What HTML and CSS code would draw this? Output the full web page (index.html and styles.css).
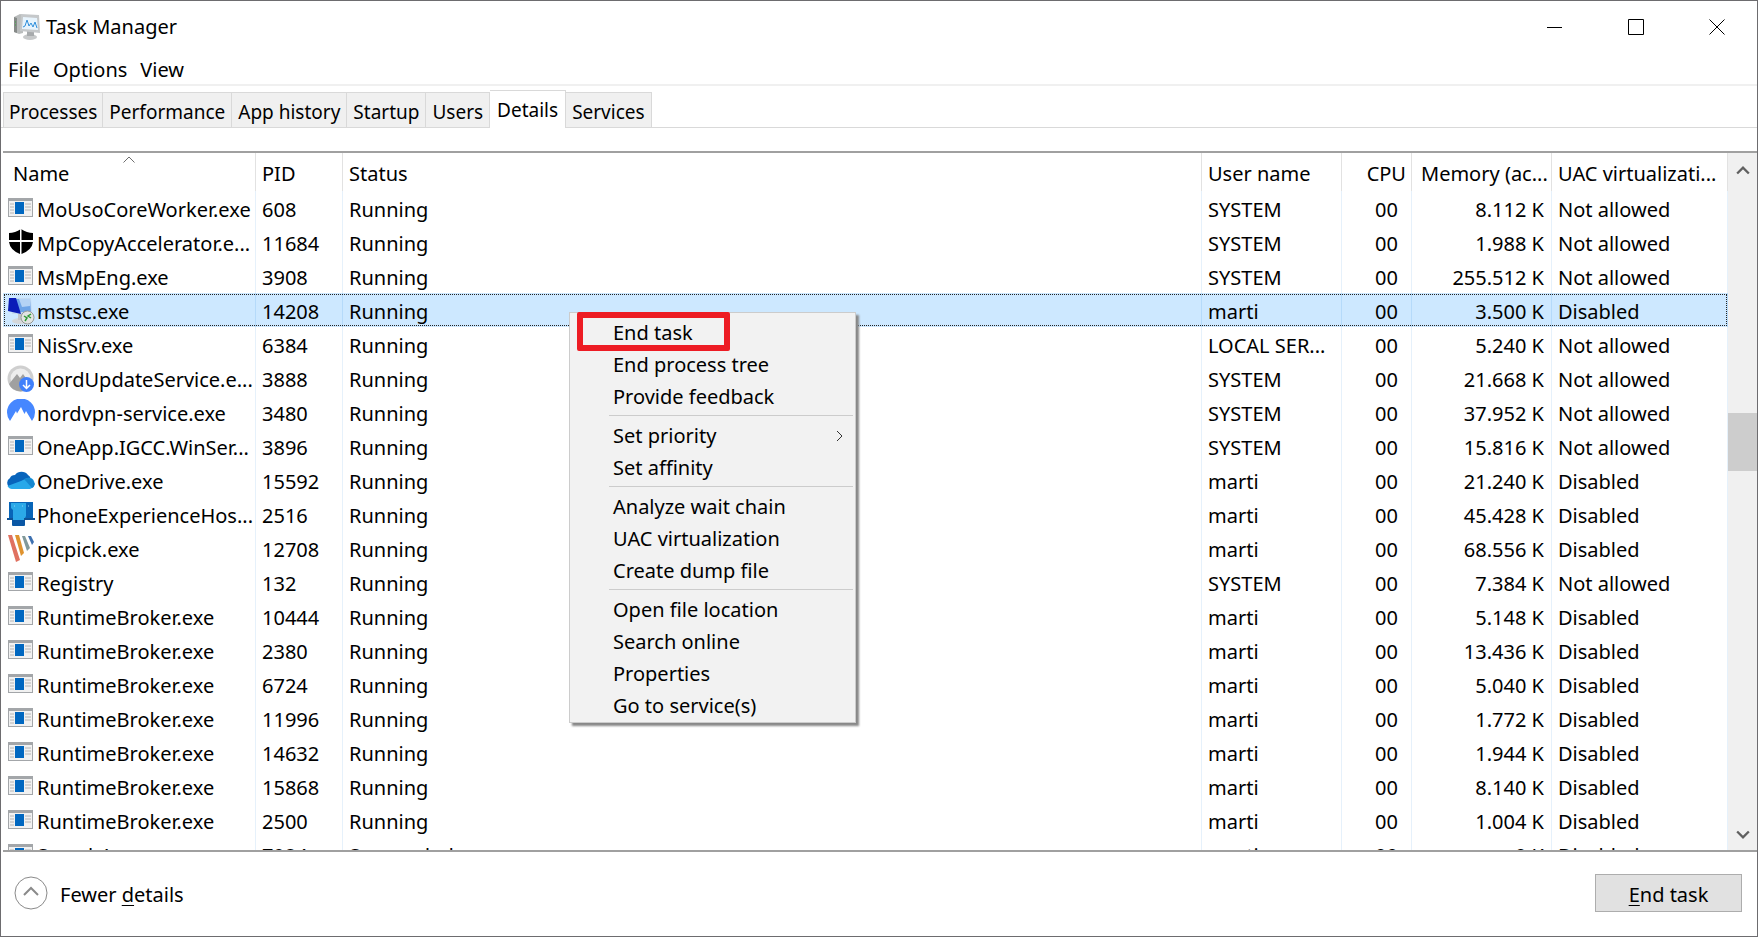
FILE: index.html
```html
<!DOCTYPE html>
<html lang="en">
<head>
    <meta charset="UTF-8">
    <meta name="viewport" content="width=device-width, initial-scale=1.0">
    <title>Task Manager</title>
    <link rel="stylesheet" href="styles.css">
</head>
<body>
    <!-- Process icons -->
    <svg class="sprite" aria-hidden="true">
        <symbol id="icon-exe" viewBox="0 0 28 28">
            <rect x="1" y="3" width="25" height="19" fill="#a3a6a9"/>
            <rect x="2" y="6" width="23" height="15" fill="#f1f1f1"/>
            <path d="M3 9h4M3 12h4M3 15h4M3 18h4M18 9h6M18 12h6M18 15h6" stroke="#b4b4b4"/>
            <rect x="8" y="7" width="9" height="12" fill="#0067c0"/>
        </symbol>
        <symbol id="icon-shield" viewBox="0 0 28 28">
            <path d="M14 0Q8 4 2 4V11H13V0.500ZM14 0Q20 4 26 4V11H14.500V0.500ZM2 13H13V25Q3 21 2 13ZM26 13H14.500V25Q25 21 26 13Z" fill="#000"/>
        </symbol>
        <symbol id="icon-mstsc" viewBox="0 0 28 28">
            <ellipse cx="13" cy="24" rx="8" ry="3" fill="#d5d8da"/>
            <path d="M11 17h6v6h-6z" fill="#c3c6c9"/>
            <path d="M2 1L24 1L25 17L5 17Z" fill="#c4daf0"/>
            <path d="M4 2L23 2L24 15L6 15Z" fill="#6fa5e8"/>
            <path d="M12 2L23 2L23 9L15 10Z" fill="#b5d3f5"/>
            <path d="M2 1L9 1L14 17L1 14Z" fill="#0a1bb8"/>
            <circle cx="20.500" cy="20.500" r="6.500" fill="#e2e4e2" stroke="#989c99"/>
            <path d="M17 19l3 2-2 3M24 17l-3 2 3 2" fill="none" stroke="#2d9a35" stroke-width="1.500"/>
        </symbol>
        <symbol id="icon-nordupdate" viewBox="0 0 28 28">
            <circle cx="13.500" cy="13.500" r="13" fill="#cfcfcf"/>
            <circle cx="13.500" cy="13.500" r="10" fill="#ededed"/>
            <path d="M2 19L10 9L13 13L16 9L24 20Q21 26 13.500 26.500Q5 26 2 19Z" fill="#a0a0a0"/>
            <circle cx="19.500" cy="19.500" r="7.500" fill="#4080fb"/>
            <path d="M19.500 15v8M16 20l3.500 3.500 3.500-3.500" fill="none" stroke="#fff" stroke-width="1.500"/>
        </symbol>
        <symbol id="icon-nordvpn" viewBox="0 0 28 28">
            <path d="M3 22Q0 18 0 13.500A14 14 0 0 1 28 13.500Q28 18 25 22L19 12L17.500 15L14 8L10 14.500L9 12Z" fill="#4687ff"/>
        </symbol>
        <symbol id="icon-onedrive" viewBox="0 0 28 28">
            <path d="M4 21A5.500 5.500 0 0 1 3 11Q4 8 8 8A8 8 0 0 1 21 8Q23 9 24 12L14 18Z" fill="#0864bc"/>
            <path d="M20 11Q25 10 27 14Q29 20 23 22H5Q2 22 0.500 19L14 14Z" fill="#28a8ea"/>
            <path d="M17 12Q21 10 25 12L28 17Q27 20 25 21Z" fill="#1687d0"/>
        </symbol>
        <symbol id="icon-phone" viewBox="0 0 28 28">
            <rect x="2" y="1" width="24" height="18" fill="#0865b8"/>
            <path d="M4 2H19V15L17 19H6V9L4 7Z" fill="#2ba9e8"/>
            <path d="M7 5h1M15 5h1M21 5h1" stroke="#8fd3f7"/>
            <path d="M0 17H6V19H0ZM17 17H28V19H17Z" fill="#0f5295"/>
            <path d="M5 19H18V24Q18 25 17 25H6Q5 25 5 24Z" fill="#0a57a5"/>
        </symbol>
        <symbol id="icon-picpick" viewBox="0 0 28 28">
            <path d="M1 0H5L13 25L9 27Z" fill="#e07160"/>
            <path d="M8 0H12L17 18L14 21Z" fill="#df932f"/>
            <path d="M15 1H18L23 13L20 16Z" fill="#81999a"/>
            <path d="M21 1H24L27 7L25 10Z" fill="#3d70b0"/>
        </symbol>
    </svg>

    <div class="window">
        <header class="title-bar">
            <svg class="app-icon" viewBox="0 0 28 28" aria-hidden="true">
                <path d="M1 4L7 1L10 2V20L6 21L1 19Z" fill="#b9bcbc"/>
                <path d="M1 4L4 5V20L1 19Z" fill="#868a88"/>
                <path d="M2 9h1M2 12h1" stroke="#3faa42"/>
                <ellipse cx="17" cy="24" rx="7" ry="3" fill="#c7c9ca"/>
                <path d="M14 18h7v5h-7z" fill="#a7aaac"/>
                <path d="M8 1L26 2L27 20L7 18Z" fill="#c5c8ca"/>
                <path d="M10 4L24 5L25 17L9 16Z" fill="#e7f4fd"/>
                <path d="M10 14L12 13L14 7L16 13L18 10L20 14L22 9L24 15" fill="none" stroke="#2f8fdb"/>
            </svg>
            <h1>Task Manager</h1>
            <div class="window-buttons">
                <button aria-label="Minimize"><svg viewBox="0 0 16 16"><path d="M0 8.500H15"/></svg></button>
                <button aria-label="Maximize"><svg viewBox="0 0 16 16"><path d="M0.500 0.500H15.500V15.500H0.500Z"/></svg></button>
                <button aria-label="Close"><svg viewBox="0 0 16 16"><path d="M0.500 0.500L15.500 15.500M15.500 0.500L0.500 15.500"/></svg></button>
            </div>
        </header>

        <nav class="menu-bar">
            <button>File</button>
            <button>Options</button>
            <button>View</button>
        </nav>

        <div class="tabs" role="tablist">
            <button role="tab">Processes</button>
            <button role="tab">Performance</button>
            <button role="tab">App history</button>
            <button role="tab">Startup</button>
            <button role="tab">Users</button>
            <button role="tab" class="active" aria-selected="true">Details</button>
            <button role="tab">Services</button>
        </div>

        <main class="list">
            <div class="list-view">
                <table>
                    <thead>
                        <tr>
                            <th class="col-name">Name
                                <svg class="sort-arrow" viewBox="0 0 12 7" aria-hidden="true"><path d="M0.500 6.500L6 1L11.500 6.500"/></svg>
                            </th>
                            <th class="col-pid">PID</th>
                            <th>Status</th>
                            <th class="col-user">User name</th>
                            <th class="col-cpu">CPU</th>
                            <th class="col-memory">Memory (ac...</th>
                            <th class="col-uac">UAC virtualizati...</th>
                        </tr>
                    </thead>
                    <tbody id="processList"></tbody>
                </table>
            </div>
            <div class="scrollbar">
                <button aria-label="Scroll up"><svg viewBox="0 0 12 10"><path d="M1 8L6 3L11 8"/></svg></button>
                <div class="track"><div class="thumb"></div></div>
                <button aria-label="Scroll down"><svg viewBox="0 0 12 10"><path d="M1 2L6 7L11 2"/></svg></button>
            </div>
        </main>

        <footer class="bottom-bar">
            <button class="fewer-details">
                <svg viewBox="0 0 34 34" aria-hidden="true">
                    <circle cx="17" cy="17" r="16"/>
                    <path class="chevron" d="M10 19L17 12L24 19"/>
                </svg>
                <span>Fewer <u>d</u>etails</span>
            </button>
            <button class="end-task"><span><u>E</u>nd task</span></button>
        </footer>

        <div class="context-menu" role="menu">
            <button role="menuitem" class="marked">End task</button>
            <button role="menuitem">End process tree</button>
            <button role="menuitem">Provide feedback</button>
            <hr>
            <button role="menuitem">Set priority
                <svg viewBox="0 0 8 12" aria-hidden="true"><path d="M1 1L6 6L1 11"/></svg>
            </button>
            <button role="menuitem">Set affinity</button>
            <hr>
            <button role="menuitem">Analyze wait chain</button>
            <button role="menuitem">UAC virtualization</button>
            <button role="menuitem">Create dump file</button>
            <hr>
            <button role="menuitem">Open file location</button>
            <button role="menuitem">Search online</button>
            <button role="menuitem">Properties</button>
            <button role="menuitem">Go to service(s)</button>
        </div>
    </div>

    <script>
        // icon, name, pid, status, user, memory, UAC virtualization
        const processes = [
            ["exe", "MoUsoCoreWorker.exe", 608, "Running", "SYSTEM", "8.112", "Not allowed"],
            ["shield", "MpCopyAccelerator.e...", 11684, "Running", "SYSTEM", "1.988", "Not allowed"],
            ["exe", "MsMpEng.exe", 3908, "Running", "SYSTEM", "255.512", "Not allowed"],
            ["mstsc", "mstsc.exe", 14208, "Running", "marti", "3.500", "Disabled"],
            ["exe", "NisSrv.exe", 6384, "Running", "LOCAL SER...", "5.240", "Not allowed"],
            ["nordupdate", "NordUpdateService.e...", 3888, "Running", "SYSTEM", "21.668", "Not allowed"],
            ["nordvpn", "nordvpn-service.exe", 3480, "Running", "SYSTEM", "37.952", "Not allowed"],
            ["exe", "OneApp.IGCC.WinSer...", 3896, "Running", "SYSTEM", "15.816", "Not allowed"],
            ["onedrive", "OneDrive.exe", 15592, "Running", "marti", "21.240", "Disabled"],
            ["phone", "PhoneExperienceHos...", 2516, "Running", "marti", "45.428", "Disabled"],
            ["picpick", "picpick.exe", 12708, "Running", "marti", "68.556", "Disabled"],
            ["exe", "Registry", 132, "Running", "SYSTEM", "7.384", "Not allowed"],
            ["exe", "RuntimeBroker.exe", 10444, "Running", "marti", "5.148", "Disabled"],
            ["exe", "RuntimeBroker.exe", 2380, "Running", "marti", "13.436", "Disabled"],
            ["exe", "RuntimeBroker.exe", 6724, "Running", "marti", "5.040", "Disabled"],
            ["exe", "RuntimeBroker.exe", 11996, "Running", "marti", "1.772", "Disabled"],
            ["exe", "RuntimeBroker.exe", 14632, "Running", "marti", "1.944", "Disabled"],
            ["exe", "RuntimeBroker.exe", 15868, "Running", "marti", "8.140", "Disabled"],
            ["exe", "RuntimeBroker.exe", 2500, "Running", "marti", "1.004", "Disabled"],
            ["exe", "SearchApp.exe", 7924, "Suspended", "marti", "0", "Disabled"],
        ];

        const selectedPid = 14208;
        const processList = document.getElementById('processList');

        processes.forEach(([icon, name, pid, status, user, memory, uac]) => {
            const row = document.createElement('tr');
            if (pid === selectedPid) {
                row.classList.add('selected');
            }
            row.innerHTML = `
                <td><div class="process"><svg><use href="#icon-${icon}"></use></svg>${name}</div></td>
                <td>${pid}</td>
                <td>${status}</td>
                <td>${user}</td>
                <td class="cpu">00</td>
                <td class="memory">${memory} K</td>
                <td>${uac}</td>
            `;
            processList.appendChild(row);
        });
    </script>
</body>
</html>
```
FILE: styles.css
```css
*, *::before, *::after {
    box-sizing: border-box;
}
body {
    margin: 0;
    font-family: "Noto Sans", sans-serif;
    font-size: 20px;
    line-height: 28px;
    color: #000;
}
button {
    margin: 0;
    padding: 0;
    border: none;
    background: none;
    font: inherit;
    color: inherit;
}
.sprite {
    display: none;
}
.window {
    position: relative;
    display: flex;
    flex-direction: column;
    height: 100vh;
    border: 1px solid #6d6c6f;
    background: #fff;
    overflow: hidden;
}

/* Title bar */
.title-bar {
    display: flex;
    align-items: center;
    height: 52px;
    padding-left: 12px;
}
.app-icon {
    width: 28px;
    height: 28px;
    margin-right: 5px;
}
h1 {
    margin: 0;
    font-size: 20px;
    font-weight: normal;
}
.window-buttons {
    display: flex;
    margin-left: auto;
    height: 100%;
}
.window-buttons button {
    display: flex;
    align-items: center;
    justify-content: center;
    width: 81px;
}
.window-buttons svg {
    width: 16px;
    height: 16px;
    fill: none;
    stroke: #000;
}

/* Menu */
.menu-bar {
    display: flex;
    gap: 13px;
    height: 33px;
    padding-top: 2px;
    padding-left: 7px;
    border-bottom: 2px solid #f0f0f0;
}

/* Tabs */
.tabs {
    display: flex;
    align-items: flex-end;
    height: 42px;
    padding-left: 2px;
    border-bottom: 1px solid #d9d9d9;
    font-size: 19px;
}
.tabs button {
    height: 35px;
    padding: 4px 6px 0;
    border: 1px solid #d9d9d9;
    border-left: none;
    border-bottom: none;
    background: #f0f0f0;
}
.tabs button:first-child {
    padding: 4px 5px 0;
    border-left: 1px solid #d9d9d9;
}
.tabs .active {
    height: 38px;
    margin-bottom: -1px;
    padding: 2px 7px 2px;
    background: #fff;
}

/* Process list */
.list {
    display: flex;
    flex: 1;
    min-height: 0;
    margin-top: 23px;
    margin-left: 2px;
    border-top: 2px solid #a0a0a0;
    border-bottom: 2px solid #a0a0a0;
}
.list-view {
    flex: 1;
    min-width: 0;
    overflow: hidden;
}
table {
    width: 100%;
    table-layout: fixed;
    border-collapse: separate;
    border-spacing: 0;
}
th, td {
    padding: 0 6px;
    text-align: left;
    font-weight: normal;
    white-space: nowrap;
}
th {
    position: relative;
    height: 38px;
    padding-top: 4px;
    border-right: 1px solid #e2e2e2;
}
td {
    height: 34px;
    padding-top: 4px;
    border-right: 1px solid #e6f1fb;
}
.col-name {
    width: 253px;
    padding-left: 10px;
}
.col-pid {
    width: 87px;
}
.col-user {
    width: 140px;
}
.col-cpu {
    width: 70px;
    text-align: right;
}
.col-memory {
    width: 140px;
    padding-left: 9px;
}
.col-memory, .col-cpu {
    padding-right: 5px;
}
.col-uac {
    width: 176px;
}
.sort-arrow {
    position: absolute;
    top: 3px;
    left: 120px;
    width: 12px;
    height: 7px;
    fill: none;
    stroke: #6d6d6d;
}
td:first-child {
    padding-left: 4px;
    padding-right: 0;
}
td.cpu {
    padding-right: 13px;
    text-align: right;
}
td.memory {
    padding-right: 7px;
    text-align: right;
}
.process {
    display: flex;
    align-items: center;
    gap: 2px;
}
.process svg {
    flex: none;
    width: 28px;
    height: 28px;
    margin-bottom: 2px;
}
.selected {
    background: #cde8ff;
    outline: 1px dotted #222;
    outline-offset: -2px;
}
.selected td {
    border-right-color: #b5dafa;
}

/* Scroll bar */
.scrollbar {
    display: flex;
    flex-direction: column;
    width: 29px;
    background: #f0f0f0;
}
.scrollbar button {
    height: 32px;
}
.scrollbar svg {
    width: 14px;
    height: 12px;
    fill: none;
    stroke: #606060;
    stroke-width: 2;
}
.track {
    display: flex;
    flex-direction: column;
    flex: 1;
}
.track::before {
    content: "";
    flex: 228;
}
.track::after {
    content: "";
    flex: 347;
}
.thumb {
    height: 58px;
    background: #cdcdcd;
}

/* Bottom bar */
.bottom-bar {
    display: flex;
    align-items: center;
    justify-content: space-between;
    height: 84px;
    padding: 0 15px 2px 13px;
}
.fewer-details {
    display: flex;
    align-items: center;
    gap: 12px;
}
.fewer-details span, .end-task span {
    display: block;
    padding-top: 4px;
}
.fewer-details svg {
    width: 34px;
    height: 34px;
    fill: none;
    stroke: #8a8a8a;
}
.fewer-details .chevron {
    stroke-width: 2;
}
u {
    text-underline-offset: 3px;
    text-decoration-thickness: 1px;
}
.end-task {
    width: 147px;
    height: 38px;
    border: 1px solid #adadad;
    background: #e1e1e1;
}

/* Context menu */
.context-menu {
    position: absolute;
    top: 311px;
    left: 568px;
    width: 287px;
    padding: 3px 2px 1px;
    border: 1px solid #ccc;
    background: #f2f2f2;
    box-shadow: 3px 3px 2px #888;
}
.context-menu button {
    display: flex;
    align-items: center;
    justify-content: space-between;
    width: 100%;
    height: 32px;
    padding: 2px 9px 0 41px;
}
.context-menu hr {
    height: 1px;
    margin: 3px 0 3px 37px;
    border: none;
    background: #ccc;
}
.context-menu svg {
    width: 8px;
    height: 12px;
    fill: none;
    stroke: #333;
}
.context-menu .marked {
    position: relative;
}
.marked::after {
    content: "";
    position: absolute;
    top: -4px;
    left: 5px;
    width: 153px;
    height: 39px;
    border: 6px solid #ed1c24;
    border-radius: 2px;
}
```
